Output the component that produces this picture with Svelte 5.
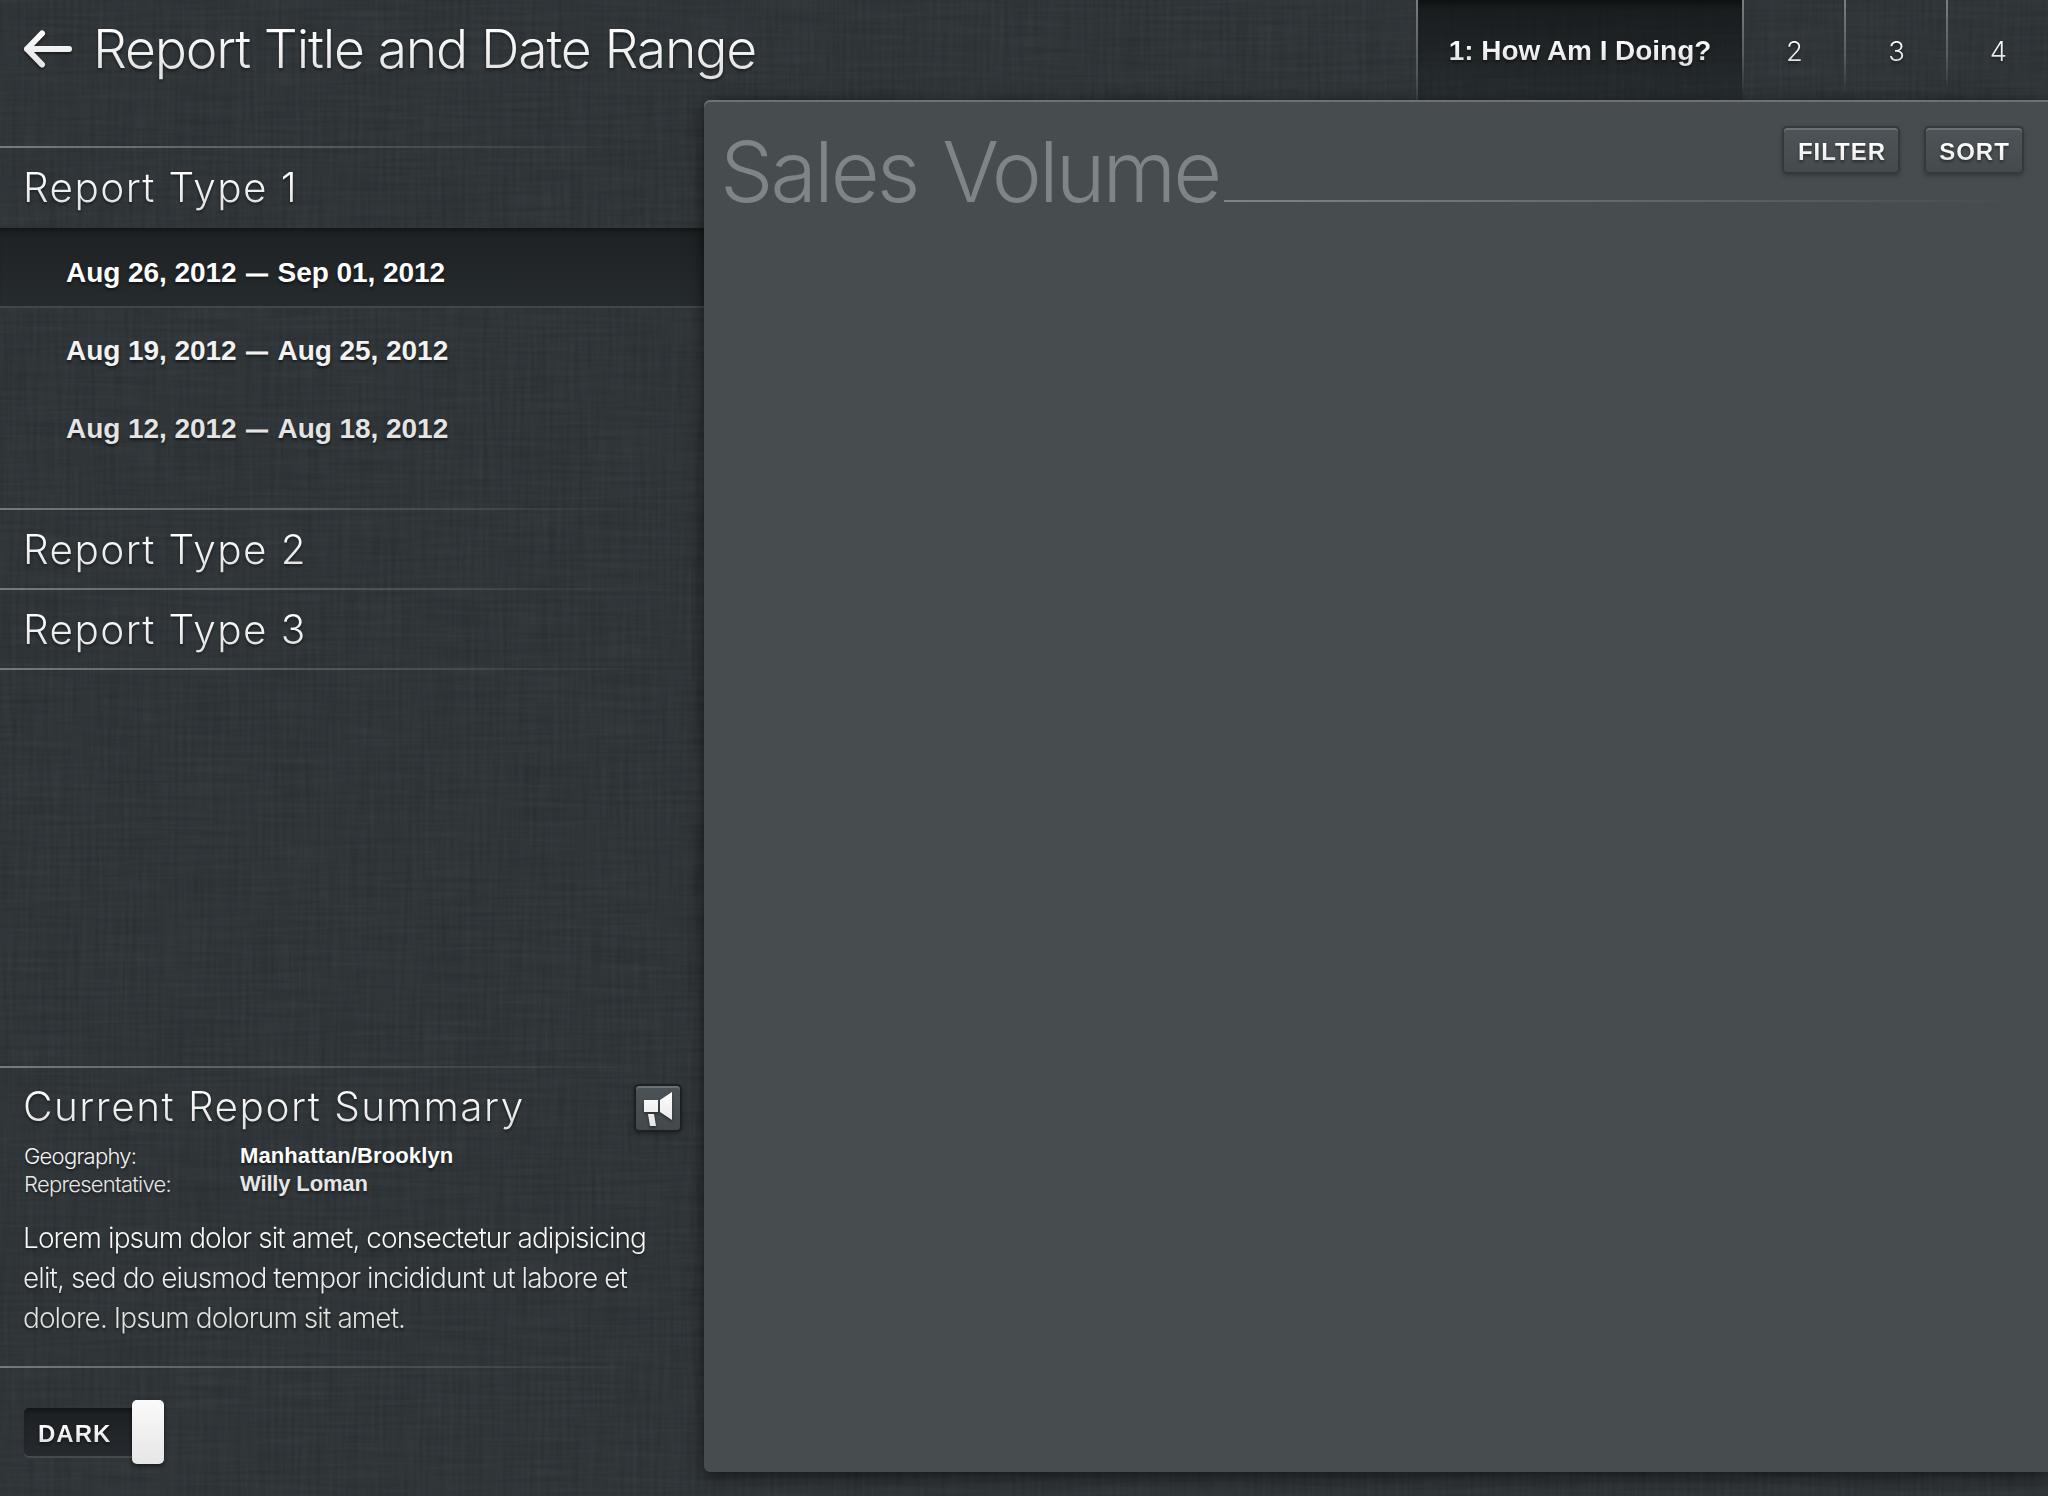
<script>
  const tabs = ['2', '3', '4'];
  const dates = [
    { from: 'Aug 26, 2012', to: 'Sep 01, 2012', selected: true },
    { from: 'Aug 19, 2012', to: 'Aug 25, 2012', tone: 'mid' },
    { from: 'Aug 12, 2012', to: 'Aug 18, 2012', tone: 'dim' }
  ];
  const facts = [
    { label: 'Geography:', value: 'Manhattan/Brooklyn' },
    { label: 'Representative:', value: 'Willy Loman' }
  ];
</script>

<div class="app">
  <!-- Woven linen backdrop: horizontal and vertical streaks summed -->
  <svg class="linen" width="2048" height="1496" aria-hidden="true">
    <filter id="linen" x="0" y="0" width="100%" height="100%" color-interpolation-filters="sRGB">
      <feTurbulence type="fractalNoise" baseFrequency="0.012 0.24" numOctaves="2" seed="4" result="h" />
      <feColorMatrix in="h" values="0.042 0 0 0 0.072  0.042 0 0 0 0.083  0.042 0 0 0 0.089  0 0 0 0 1" result="hc" />
      <feTurbulence type="fractalNoise" baseFrequency="0.24 0.012" numOctaves="2" seed="9" result="v" />
      <feColorMatrix in="v" values="0.042 0 0 0 0.072  0.042 0 0 0 0.083  0.042 0 0 0 0.089  0 0 0 0 1" result="vc" />
      <feComposite in="hc" in2="vc" operator="arithmetic" k1="0" k2="1" k3="1" k4="0" />
    </filter>
    <rect width="2048" height="1496" filter="url(#linen)" />
  </svg>

  <header>
    <svg class="back" width="50" height="40" viewBox="0 0 50 40">
      <defs>
        <linearGradient id="arrow" gradientUnits="userSpaceOnUse" x1="0" y1="0" x2="0" y2="40">
          <stop offset="0" stop-color="#fff" />
          <stop offset="1" stop-color="#e2e2e2" />
        </linearGradient>
      </defs>
      <path d="M20 4.5 L5 20 L20 35.5 M5 20 H47" fill="none" stroke="url(#arrow)" stroke-width="6" stroke-linecap="round" stroke-linejoin="round" />
    </svg>
    <h1 class="ink">Report Title and Date Range</h1>
    <nav>
      <div class="tab active"><span class="ink strong">1: How Am I Doing?</span></div>
      {#each tabs as t}
        <div class="tab"><span class="ink num">{t}</span></div>
      {/each}
    </nav>
  </header>

  <main>
    <aside>
      <section class="type">
        <div class="rule"></div>
        <h2 class="ink">Report Type 1</h2>
      </section>
      <ul>
        {#each dates as d}
          <li class={d.selected ? 'selected' : d.tone}>{d.from}<span class="dash">—</span>{d.to}</li>
        {/each}
      </ul>
      <section class="type">
        <div class="rule"></div>
        <h2 class="ink">Report Type 2</h2>
      </section>
      <section class="type">
        <div class="rule"></div>
        <h2 class="ink">Report Type 3</h2>
      </section>
      <div class="rule"></div>

      <section class="summary">
        <div class="rule"></div>
        <div class="summary-head">
          <h2 class="ink">Current Report Summary</h2>
          <button class="horn" aria-label="Announce">
            <svg width="44" height="44" viewBox="0 0 44 44">
              <defs>
                <linearGradient id="horn" gradientUnits="userSpaceOnUse" x1="0" y1="6" x2="0" y2="40">
                  <stop offset="0" stop-color="#fff" />
                  <stop offset="1" stop-color="#e4e4e4" />
                </linearGradient>
              </defs>
              <path fill="url(#horn)" d="M8 14h14v12H8z M24 14 L36 6 V34 L24 26z M12 28h6l2 12h-6z" />
            </svg>
          </button>
        </div>
        <dl>
          {#each facts as f}
            <dt>{f.label}</dt>
            <dd>{f.value}</dd>
          {/each}
        </dl>
        <p class="ink">Lorem ipsum dolor sit amet, consectetur adipisicing<br />elit, sed do eiusmod tempor incididunt ut labore et<br />dolore. Ipsum dolorum sit amet.</p>
        <div class="rule"></div>
      </section>

      <div class="toggle">
        <div class="track"><span class="ink caps">DARK</span></div>
        <div class="knob"></div>
      </div>
    </aside>

    <article>
      <div class="title-row">
        <h3>Sales Volume</h3>
        <div class="rule"></div>
      </div>
      <div class="actions">
        <button><span class="ink caps">FILTER</span></button>
        <button><span class="ink caps">SORT</span></button>
      </div>
    </article>
  </main>
</div>

<style>
  :global(body) {
    background: #2f3538;
  }
  .app {
    position: relative;
    width: 2048px;
    height: 1496px;
    overflow: hidden;
    display: flex;
    flex-direction: column;
    color: #f4f4f4;
    font-family: Inter, 'Liberation Sans', sans-serif;
    font-weight: 300;
  }
  .linen {
    position: absolute;
    inset: 0;
  }
  h1, h2, h3, p, ul, dl, dd {
    margin: 0;
    padding: 0;
    font-weight: 300;
  }
  button {
    border: 0;
    padding: 0;
    margin: 0;
  }
  .ink {
    background: linear-gradient(#fff 20%, #e2e2e2 80%);
    -webkit-background-clip: text;
    background-clip: text;
    color: transparent;
    filter: drop-shadow(0 2px 1.5px rgba(0, 0, 0, 0.45));
    white-space: nowrap;
  }
  .strong {
    font: 700 28px/34px 'Liberation Sans', sans-serif;
    letter-spacing: -0.05px;
  }
  .caps {
    font: 700 24px/28px 'Liberation Sans', sans-serif;
    letter-spacing: 1px;
  }
  .rule {
    height: 2px;
    background: linear-gradient(90deg, rgba(255, 255, 255, 0.34), rgba(255, 255, 255, 0) 92%);
  }

  header {
    position: relative;
    height: 100px;
    flex: none;
    display: flex;
  }
  .back {
    margin: 29px 0 0 22px;
    filter: drop-shadow(0 2px 1.5px rgba(0, 0, 0, 0.5));
  }
  h1 {
    font-size: 53.5px;
    line-height: 64px;
    height: 66px;
    margin: 17px 0 0 21px;
    letter-spacing: -1.2px;
  }
  nav {
    display: flex;
    margin-left: auto;
  }
  .tab {
    box-sizing: border-box;
    width: 102px;
    border-left: 2px solid;
    border-image: linear-gradient(rgba(255, 255, 255, 0.36), rgba(255, 255, 255, 0.2) 55%, rgba(255, 255, 255, 0) 92%) 1;
    padding-top: 34px;
    text-align: center;
  }
  .tab.active {
    width: 326px;
    border-image: linear-gradient(rgba(255, 255, 255, 0.36), rgba(255, 255, 255, 0.08)) 1;
    background: linear-gradient(rgba(14, 17, 18, 0.72), rgba(18, 22, 24, 0.55) 55%, rgba(24, 28, 30, 0.3)) padding-box;
    box-shadow: inset 0 8px 6px -4px rgba(0, 0, 0, 0.4);
  }
  .tab span {
    display: block;
  }
  .num {
    font-size: 27.5px;
    line-height: 34px;
    padding-left: 1px;
  }

  main {
    position: relative;
    flex: 1;
    display: flex;
  }
  aside {
    width: 704px;
    flex: none;
    display: flex;
    flex-direction: column;
    padding-top: 46px;
    box-sizing: border-box;
  }
  .type {
    height: 80px;
  }
  .type:first-child {
    height: 82px;
  }
  h2 {
    font-size: 40.5px;
    line-height: 50px;
    letter-spacing: 1.42px;
    padding-left: 23px;
  }
  .type h2 {
    margin-top: 15px;
  }
  ul {
    list-style: none;
    height: 280px;
  }
  li {
    box-sizing: border-box;
    height: 78px;
    padding-left: 66px;
    padding-top: 27px;
    font: 700 28px/35px 'Liberation Sans', sans-serif;
    letter-spacing: -0.05px;
    color: #fff;
    text-shadow: 0 2px 3px rgba(0, 0, 0, 0.55);
    border-bottom: 2px solid transparent;
  }
  li.mid {
    color: #f2f2f2;
  }
  li.dim {
    color: #e4e4e4;
  }
  li.selected {
    height: 80px;
    margin-bottom: -2px;
    border-bottom-color: #42484a;
    background: linear-gradient(#1d2123, #262b2e);
    box-shadow: inset 0 6px 5px -3px rgba(0, 0, 0, 0.35);
  }
  .dash {
    display: inline-block;
    font-size: 21px;
    line-height: 20px;
    vertical-align: 2px;
    margin: 0 10px;
    -webkit-text-stroke: 1.1px currentColor;
  }

  .summary {
    margin-top: 396px;
  }
  .summary-head {
    box-sizing: border-box;
    height: 71px;
    display: flex;
    align-items: flex-start;
    justify-content: space-between;
    padding: 16px 22px 0 0;
  }
  .summary-head h2 {
    margin-top: -2px;
    letter-spacing: 1.5px;
  }
  .horn {
    width: 48px;
    height: 48px;
    box-sizing: border-box;
    border: 2px solid #1c2022;
    border-radius: 5px;
    background: linear-gradient(#4c5356, #43484b);
    box-shadow: inset 0 2px 0 #6b7174, 0 2px 4px rgba(0, 0, 0, 0.35);
  }
  .horn svg {
    display: block;
    filter: drop-shadow(0 2px 1.5px rgba(0, 0, 0, 0.4));
  }
  dl {
    display: grid;
    grid-template-columns: 216px 1fr;
    grid-auto-rows: 28px;
    padding: 3px 0 0 24px;
    line-height: 28px;
    font-size: 22px;
    text-shadow: 0 2px 3px rgba(0, 0, 0, 0.5);
  }
  dt {
    letter-spacing: -0.75px;
  }
  dd {
    font: 700 22px/28px 'Liberation Sans', sans-serif;
    letter-spacing: 0.1px;
    color: #fff;
  }
  dt:nth-of-type(2),
  dd:nth-of-type(2) {
    color: #e6e6e6;
  }
  dd:nth-of-type(2) {
    letter-spacing: -0.15px;
  }
  .summary p {
    font-size: 28px;
    line-height: 40px;
    letter-spacing: -0.92px;
    padding-left: 23px;
    margin: 20px 0 28px;
    background-image: linear-gradient(#fff, #dcdcdc);
  }

  .toggle {
    display: flex;
    align-items: flex-start;
    padding: 32px 0 0 24px;
  }
  .track {
    box-sizing: border-box;
    width: 112px;
    height: 48px;
    margin: 8px -4px 0 0;
    padding: 12px 0 0 14px;
    border-radius: 5px;
    background: linear-gradient(#1c2022, #26292e);
    box-shadow: inset 0 6px 5px -3px rgba(0, 0, 0, 0.35), 0 2px 0 #454b4d;
  }
  .track span {
    display: block;
  }
  .knob {
    position: relative;
    width: 32px;
    height: 64px;
    border-radius: 5px;
    background: linear-gradient(#fafafa, #e6e6e6);
    box-shadow: 0 2px 4px rgba(0, 0, 0, 0.5);
  }

  article {
    position: relative;
    box-sizing: border-box;
    width: 1344px;
    height: 1372px;
    display: flex;
    justify-content: space-between;
    border-radius: 6px 0 0 6px;
    background: #474c4e;
    box-shadow: inset 0 2px 0 #6c7174, 0 4px 18px rgba(0, 0, 0, 0.6);
  }
  .title-row {
    display: flex;
    flex: 1;
    margin-right: -1000px;
  }
  h3 {
    font-size: 84.5px;
    line-height: 100px;
    letter-spacing: -2.95px;
    word-spacing: 4px;
    color: #7f8487;
    padding: 21px 0 0 16px;
    white-space: nowrap;
  }
  .title-row .rule {
    width: 824px;
    flex: none;
    margin: 100px 0 0 5px;
    background: linear-gradient(90deg, #7f8487, rgba(127, 132, 135, 0) 96%);
  }
  .actions {
    position: relative;
    display: flex;
    gap: 24px;
    padding: 26px 24px 0 0;
  }
  .actions button {
    box-sizing: border-box;
    height: 48px;
    width: 118px;
    border: 2px solid #33393c;
    border-radius: 5px;
    background: linear-gradient(#4d5457, #454a4d);
    box-shadow: inset 0 2px 0 #6b7174, 0 2px 4px rgba(0, 0, 0, 0.25);
    display: flex;
    justify-content: center;
    padding: 10px 0 0 2px;
  }
  .actions button + button {
    width: 100px;
    padding-left: 1px;
  }
</style>
